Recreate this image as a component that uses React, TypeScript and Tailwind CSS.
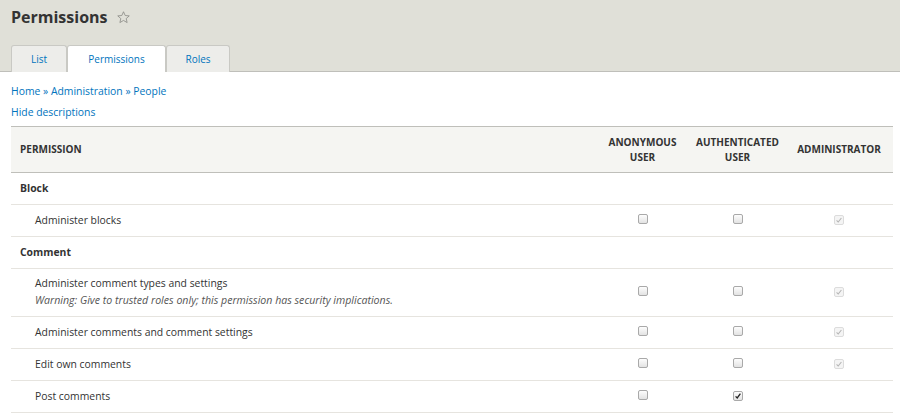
import React from "react";

type Perm = {
  label: string;
  warning?: string;
  anon: boolean;
  auth: boolean;
  admin: boolean;
};

type Group = { name: string; perms: Perm[] };

const groups: Group[] = [
  {
    name: "Block",
    perms: [{ label: "Administer blocks", anon: false, auth: false, admin: true }],
  },
  {
    name: "Comment",
    perms: [
      {
        label: "Administer comment types and settings",
        warning: "Warning: Give to trusted roles only; this permission has security implications.",
        anon: false,
        auth: false,
        admin: true,
      },
      { label: "Administer comments and comment settings", anon: false, auth: false, admin: true },
      { label: "Edit own comments", anon: false, auth: false, admin: true },
      { label: "Post comments", anon: false, auth: true, admin: false },
    ],
  },
];

function Box({ checked, disabled }: { checked: boolean; disabled?: boolean }) {
  if (disabled) {
    return (
      <span className="inline-flex w-[10px] h-[10px] items-center justify-center rounded-[2px] border border-[#dcdcdc] bg-[#f4f4f4]">
        <svg viewBox="0 0 10 10" className="w-[8px] h-[8px]">
          <path d="M2 5.5 L4 7.5 L8 2.5" fill="none" stroke="#b4b4b4" strokeWidth="1.3" />
        </svg>
      </span>
    );
  }
  return (
    <span className="inline-flex w-[10px] h-[10px] items-center justify-center rounded-[2px] border border-[#a9a9a9] bg-gradient-to-b from-[#fdfdfd] to-[#e3e3e3]">
      {checked && (
        <svg viewBox="0 0 10 10" className="w-[8px] h-[8px]">
          <path d="M2 5.5 L4 7.5 L8 2" fill="none" stroke="#222" strokeWidth="1.6" />
        </svg>
      )}
    </span>
  );
}

export default function App() {
  return (
    <div className="w-[900px] h-[418px] overflow-hidden bg-white text-[#333] font-['Open_Sans',sans-serif]">
      <div className="bg-[#e0e0d8] border-b border-[#bfbfba] pt-[6px] px-[11px] h-[72px] flex flex-col">
        <div className="flex items-center gap-[8px] h-[22px]">
          <h1 className="text-[16px] font-bold text-[#333] leading-none">Permissions</h1>
          <svg viewBox="0 0 24 24" className="w-[15px] h-[15px]">
            <path
              d="M12 2.8l2.7 6 6.5.6-4.9 4.3 1.5 6.4L12 16.7l-5.8 3.4 1.5-6.4-4.9-4.3 6.5-.6z"
              fill="none"
              stroke="#8a8a85"
              strokeWidth="1.3"
              strokeLinejoin="round"
            />
          </svg>
        </div>
        <div className="mt-auto flex -mb-px text-[10px]">
          <div className="w-[56px] h-[27px] flex items-center justify-center bg-[#ededea] border border-b-0 border-[#c9c9c4] rounded-t-[3px] text-[#0074bd]">
            List
          </div>
          <div className="w-[99px] h-[27px] flex items-center justify-center bg-white border border-b-0 border-[#c9c9c4] rounded-t-[3px] text-[#0074bd]">
            Permissions
          </div>
          <div className="w-[64px] h-[27px] flex items-center justify-center bg-[#ededea] border border-b-0 border-[#c9c9c4] rounded-t-[3px] text-[#0074bd]">
            Roles
          </div>
        </div>
      </div>

      <div className="px-[11px]">
        <div className="text-[10.4px] text-[#0074bd] mt-[12px] leading-[14px]">
          Home » Administration » People
        </div>
        <div className="text-[10.4px] text-[#0074bd] mt-[7px] leading-[14px]">Hide descriptions</div>

        <table className="w-[882px] mt-[7px] border-collapse text-[10.4px]">
          <thead>
            <tr className="bg-[#f5f5f2] border-t border-b border-[#bfbfba] h-[46px]">
              <th className="text-left pl-[9px] text-[10px] font-bold text-[#333] uppercase">Permission</th>
              <th className="w-[95px] text-center text-[10px] font-bold leading-[15px] uppercase">
                Anonymous
                <br />
                user
              </th>
              <th className="w-[95px] text-center text-[10px] font-bold leading-[15px] uppercase">
                Authenticated
                <br />
                user
              </th>
              <th className="w-[108px] text-center text-[10px] font-bold uppercase">Administrator</th>
            </tr>
          </thead>
          <tbody>
            {groups.map((g) => (
              <React.Fragment key={g.name}>
                <tr className="border-b border-[#e6e4df] h-[32px]">
                  <td colSpan={4} className="pl-[9px] font-bold text-[#333]">
                    {g.name}
                  </td>
                </tr>
                {g.perms.map((p) => (
                  <tr key={p.label} className={`border-b border-[#e6e4df] ${p.warning ? "h-[48px]" : "h-[32px]"}`}>
                    <td className="pl-[24px] text-[#333]">
                      <div>{p.label}</div>
                      {p.warning && (
                        <div className="italic text-[10.6px] text-[#555] mt-[1px]">{p.warning}</div>
                      )}
                    </td>
                    <td className="text-center">
                      <Box checked={p.anon} />
                    </td>
                    <td className="text-center">
                      <Box checked={p.auth} />
                    </td>
                    <td className="text-center">{p.admin && <Box checked disabled />}</td>
                  </tr>
                ))}
              </React.Fragment>
            ))}
          </tbody>
        </table>
      </div>
    </div>
  );
}
